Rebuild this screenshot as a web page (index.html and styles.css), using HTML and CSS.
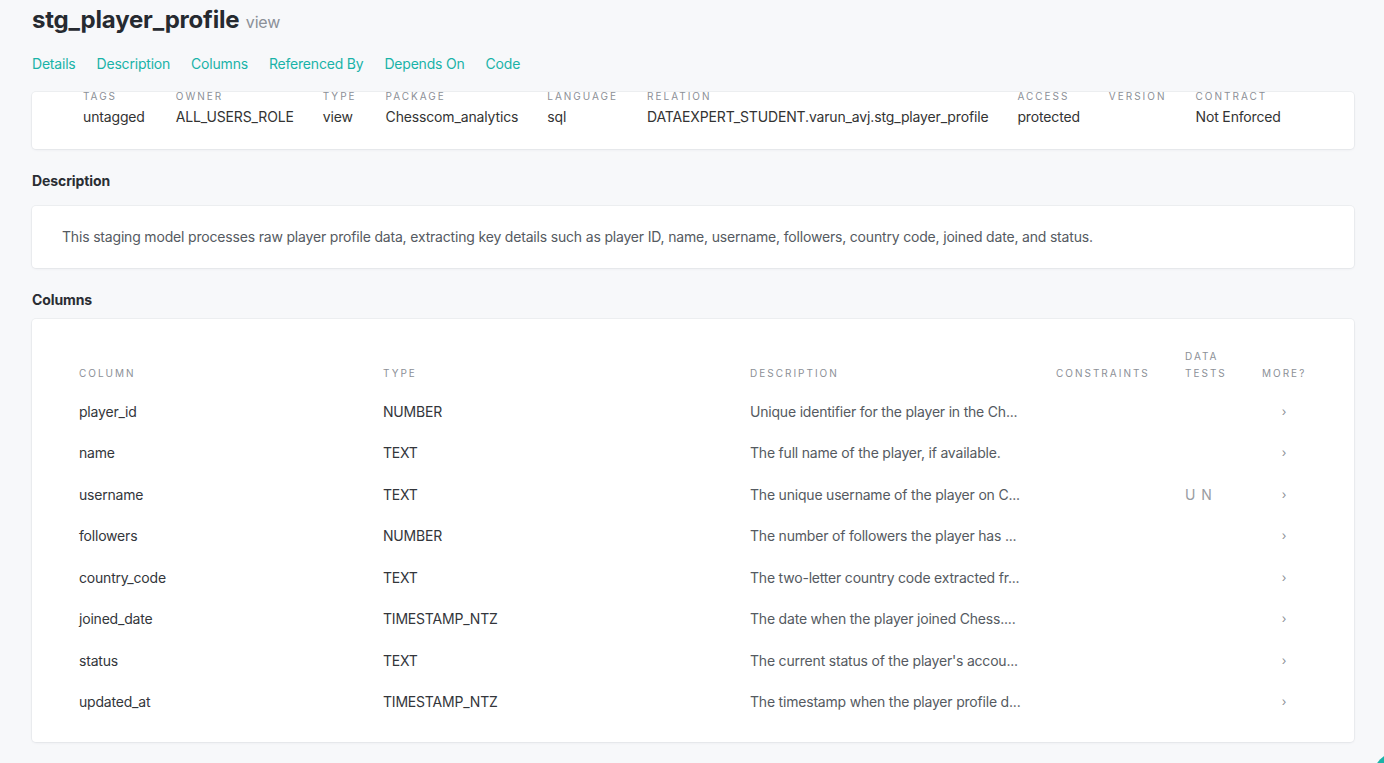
FILE: index.html
```html
<!DOCTYPE html>
<html lang="en">
<head>
<meta charset="utf-8">
<title>stg_player_profile</title>
<link rel="stylesheet" href="styles.css">
</head>
<body>
<div class="page">
  <header class="header">
    <h1 class="title">stg_player_profile <span class="title-kind">view</span></h1>
    <nav class="nav">
      <a class="nav-link">Details</a>
      <a class="nav-link">Description</a>
      <a class="nav-link">Columns</a>
      <a class="nav-link">Referenced By</a>
      <a class="nav-link">Depends On</a>
      <a class="nav-link">Code</a>
    </nav>
  </header>

  <section class="card details">
    <dl class="detail detail-first"><dt>Tags</dt><dd>untagged</dd></dl>
    <dl class="detail"><dt>Owner</dt><dd>ALL_USERS_ROLE</dd></dl>
    <dl class="detail"><dt>Type</dt><dd>view</dd></dl>
    <dl class="detail"><dt>Package</dt><dd>Chesscom_analytics</dd></dl>
    <dl class="detail"><dt>Language</dt><dd>sql</dd></dl>
    <dl class="detail"><dt>Relation</dt><dd>DATAEXPERT_STUDENT.varun_avj.stg_player_profile</dd></dl>
    <dl class="detail"><dt>Access</dt><dd>protected</dd></dl>
    <dl class="detail"><dt>Version</dt><dd></dd></dl>
    <dl class="detail"><dt>Contract</dt><dd>Not Enforced</dd></dl>
  </section>

  <h2 class="section-title desc-title">Description</h2>
  <section class="card description">
    This staging model processes raw player profile data, extracting key details such as player ID, name, username, followers, country code, joined date, and status.
  </section>

  <h2 class="section-title cols-title">Columns</h2>
  <section class="card columns">
    <table class="col-table">
      <colgroup>
        <col class="w-col"><col class="w-type"><col class="w-desc"><col class="w-cons"><col class="w-tests"><col class="w-more">
      </colgroup>
      <thead>
        <tr>
          <th>Column</th>
          <th>Type</th>
          <th>Description</th>
          <th>Constraints</th>
          <th><span class="wrap-head">Data Tests</span></th>
          <th>More?</th>
        </tr>
      </thead>
      <tbody>
        <tr><td class="c-name">player_id</td><td class="c-type">NUMBER</td><td class="c-desc">Unique identifier for the player in the Ch...</td><td></td><td class="c-tests"></td><td class="c-more"><span class="chev">›</span></td></tr>
        <tr><td class="c-name">name</td><td class="c-type">TEXT</td><td class="c-desc">The full name of the player, if available.</td><td></td><td class="c-tests"></td><td class="c-more"><span class="chev">›</span></td></tr>
        <tr><td class="c-name">username</td><td class="c-type">TEXT</td><td class="c-desc">The unique username of the player on C...</td><td></td><td class="c-tests"><span class="test">U</span><span class="test">N</span></td><td class="c-more"><span class="chev">›</span></td></tr>
        <tr><td class="c-name">followers</td><td class="c-type">NUMBER</td><td class="c-desc">The number of followers the player has ...</td><td></td><td class="c-tests"></td><td class="c-more"><span class="chev">›</span></td></tr>
        <tr><td class="c-name">country_code</td><td class="c-type">TEXT</td><td class="c-desc">The two-letter country code extracted fr...</td><td></td><td class="c-tests"></td><td class="c-more"><span class="chev">›</span></td></tr>
        <tr><td class="c-name">joined_date</td><td class="c-type">TIMESTAMP_NTZ</td><td class="c-desc">The date when the player joined Chess....</td><td></td><td class="c-tests"></td><td class="c-more"><span class="chev">›</span></td></tr>
        <tr><td class="c-name">status</td><td class="c-type">TEXT</td><td class="c-desc">The current status of the player's accou...</td><td></td><td class="c-tests"></td><td class="c-more"><span class="chev">›</span></td></tr>
        <tr><td class="c-name">updated_at</td><td class="c-type">TIMESTAMP_NTZ</td><td class="c-desc">The timestamp when the player profile d...</td><td></td><td class="c-tests"></td><td class="c-more"><span class="chev">›</span></td></tr>
      </tbody>
    </table>
  </section>
</div>
<div class="fab"></div>
</body>
</html>
```

FILE: styles.css
```css
* { box-sizing: border-box; }

html, body {
  margin: 0;
  padding: 0;
  background: #f7f8fa;
  font-family: Inter, "Liberation Sans", Arial, sans-serif;
  color: #333;
  overflow: hidden;
}

.page {
  padding: 5px 30px 20px 32px;
}

.title {
  margin: 0;
  font-size: 24px;
  line-height: 30px;
  font-weight: 700;
  color: #262a30;
  letter-spacing: -0.2px;
}

.title-kind {
  font-size: 16px;
  font-weight: 400;
  color: #8b9098;
  letter-spacing: -0.2px;
  margin-left: 1px;
}

.nav {
  display: flex;
  gap: 21px;
  margin-top: 17px;
  line-height: 20px;
  font-size: 14px;
  letter-spacing: -0.2px;
}

.nav-link {
  color: #19b3a8;
  text-decoration: none;
  cursor: pointer;
}

.card {
  background: #fff;
  border-radius: 4px;
  box-shadow: 0 0 0 1px rgba(30, 40, 60, 0.04), 0 1px 3px rgba(30, 40, 60, 0.06);
}

.details {
  margin-top: 18px;
  display: flex;
  gap: 29px;
  padding: 0 0 22px 51px;
}

.detail {
  margin: 0;
}

.detail-first {
  margin-right: 2px;
}

.detail dt {
  font-size: 10px;
  line-height: 8px;
  letter-spacing: 2px;
  text-transform: uppercase;
  color: #8c9097;
  white-space: nowrap;
}

.detail dd {
  margin: 7px 0 0;
  font-size: 14px;
  line-height: 20px;
  color: #333;
  white-space: nowrap;
  min-height: 20px;
  letter-spacing: -0.15px;
}

.section-title {
  margin: 0;
  font-size: 14px;
  line-height: 20px;
  font-weight: 700;
  color: #2a2d33;
  letter-spacing: -0.1px;
}

.desc-title {
  margin-top: 22px;
  margin-bottom: 15px;
}

.cols-title {
  margin-top: 22px;
  margin-bottom: 9px;
}

.description {
  padding: 21px 30px;
  font-size: 14px;
  line-height: 20px;
  color: #555a61;
  letter-spacing: -0.18px;
}

.columns {
  padding: 28.5px 30px 19.3px;
}

.col-table {
  width: 100%;
  border-collapse: collapse;
  table-layout: fixed;
}

.w-col { width: 304px; }
.w-type { width: 367px; }
.w-desc { width: 306px; }
.w-cons { width: 129px; }
.w-tests { width: 77px; }
.w-more { width: auto; }

.col-table th {
  text-align: left;
  vertical-align: bottom;
  font-size: 10px;
  line-height: 17px;
  font-weight: 400;
  letter-spacing: 2px;
  text-transform: uppercase;
  color: #8c9097;
  padding: 0 17px 9.8px;
  white-space: nowrap;
}

.wrap-head {
  display: inline-block;
  width: 50px;
  white-space: normal;
}

.col-table td {
  height: 41.43px;
  padding: 0 17px;
  font-size: 14px;
  line-height: 20px;
  white-space: nowrap;
  overflow: hidden;
  vertical-align: middle;
  letter-spacing: -0.2px;
}

.c-name, .c-type {
  color: #33363b;
}

.c-desc {
  color: #555a61;
}

.c-tests {
  color: #999ca2;
  font-size: 13px;
}

.test {
  margin-right: 6px;
}

.chev {
  display: inline-block;
  vertical-align: top;
  width: 44px;
  line-height: 20px;
  text-align: center;
  font-size: 12px;
  color: #8c9097;
}

.fab {
  position: fixed;
  right: -44px;
  bottom: -44px;
  width: 56px;
  height: 56px;
  border-radius: 50%;
  background: #19b3a8;
}
```
